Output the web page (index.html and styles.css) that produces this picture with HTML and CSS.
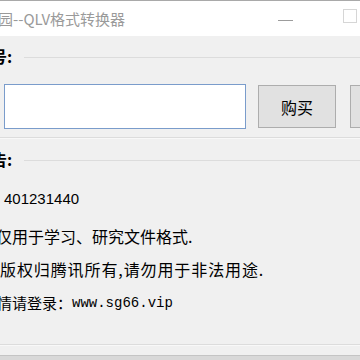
FILE: index.html
```html
<!DOCTYPE html>
<html lang="zh-CN">
<head>
<meta charset="utf-8">
<title>QLV格式转换器</title>
<link rel="stylesheet" href="styles.css">
</head>
<body>
<div class="window">
  <div class="titlebar">
    <span class="title">园--QLV格式转换器</span>
    <div class="controls">
      <span class="btn-min"></span>
      <span class="btn-max"></span>
    </div>
  </div>
  <div class="client">
    <div class="group">
      <div class="legend"><span class="legend-text">卡号:</span><span class="legend-line"></span></div>
      <div class="input-row">
        <div class="textbox"></div>
        <div class="button">购买</div>
        <div class="button button-next">激活</div>
      </div>
      <div class="group-bottom g1-bottom"></div>
    </div>
    <div class="group">
      <div class="legend legend2"><span class="legend-text">公告:</span><span class="legend-line"></span></div>
      <div class="line line1">401231440</div>
      <div class="line line2">仅用于学习、研究文件格式.</div>
      <div class="line line3">版权归腾讯所有,请勿用于非法用途.</div>
      <div class="line line4"><span class="cjk">情请登录：</span><span class="url">www.sg66.vip</span></div>
      <div class="group-bottom g2-bottom"></div>
    </div>
    <div class="bottom-edge"></div>
  </div>
</div>
</body>
</html>
```
FILE: styles.css
```css
html, body {
  margin: 0;
  padding: 0;
  width: 360px;
  height: 360px;
  overflow: hidden;
  background: #f0f0f0;
}
.window {
  width: 360px;
  height: 360px;
  overflow: hidden;
  display: flex;
  flex-direction: column;
  font-family: "Noto Sans CJK SC", "Noto Sans", sans-serif;
}
.titlebar {
  height: 35px;
  background: #ffffff;
  border-top: 1px solid #a9a9a9;
  display: flex;
  align-items: center;
  flex-shrink: 0;
}
.title {
  margin-left: -2px;
  font-size: 15px;
  color: #9a9a9a;
  white-space: nowrap;
  line-height: 20px;
}
.controls {
  margin-left: auto;
  display: flex;
  align-items: center;
}
.btn-min {
  width: 15px;
  height: 1px;
  background: #9c9c9c;
  margin-right: 50px;
  margin-top: 3px;
}
.btn-max {
  width: 12px;
  height: 12px;
  border: 1px solid #d6d6d6;
  margin-right: 3px;
  margin-top: -5px;
}
.client {
  flex: 1;
  display: flex;
  flex-direction: column;
  background: #f0f0f0;
}
.group {
  display: flex;
  flex-direction: column;
}
.legend {
  height: 20px;
  margin-top: 10px;
  display: flex;
  align-items: center;
}
.legend2 {
  margin-top: 10px;
}
.legend-text {
  margin-left: -25px;
  font-size: 16px;
  line-height: 20px;
  color: #000;
  white-space: nowrap;
  font-weight: bold;
}
.legend-line {
  flex: 1;
  height: 1px;
  background: #dcdcdc;
  margin-left: 12px;
  margin-top: 2px;
}
.input-row {
  display: flex;
  align-items: flex-start;
  margin-top: 18px;
  margin-left: 4px;
  white-space: nowrap;
}
.textbox {
  width: 240px;
  height: 43px;
  background: #ffffff;
  border: 1px solid #7a9ccb;
  flex-shrink: 0;
}
.button {
  width: 76px;
  height: 41px;
  margin-top: 1px;
  margin-left: 12px;
  background: #e1e1e1;
  border: 1px solid #adadad;
  display: flex;
  align-items: center;
  justify-content: center;
  font-size: 16px;
  color: #000;
  flex-shrink: 0;
}
.button-next {
  margin-left: 14px;
}
.group-bottom {
  height: 1px;
  background: #dcdcdc;
  border-bottom: 1px solid #f8f8f8;
}
.g1-bottom {
  margin-top: 8px;
}
.line {
  height: 20px;
  line-height: 20px;
  color: #000;
  white-space: nowrap;
  font-size: 16px;
}
.line1 {
  margin-top: 20px;
  margin-left: 4px;
  font-family: "Liberation Sans", Arial, sans-serif;
  font-size: 15px;
}
.line2 {
  margin-top: 17px;
  margin-left: -4px;
}
.line3 {
  margin-top: 13px;
  margin-left: 0;
  letter-spacing: 0.9px;
}
.line4 {
  margin-top: 14px;
  margin-left: -3px;
  display: flex;
  align-items: center;
}
.line4 .cjk {
  font-size: 15px;
}
.url {
  font-family: "Liberation Mono", "DejaVu Sans Mono", monospace;
  font-size: 14px;
  margin-left: 0;
}
.g2-bottom {
  margin-top: 31px;
}
.bottom-edge {
  margin-top: auto;
  height: 4px;
  background: #d8d8d8;
  border-top: 1px solid #c4c4c4;
}
```
